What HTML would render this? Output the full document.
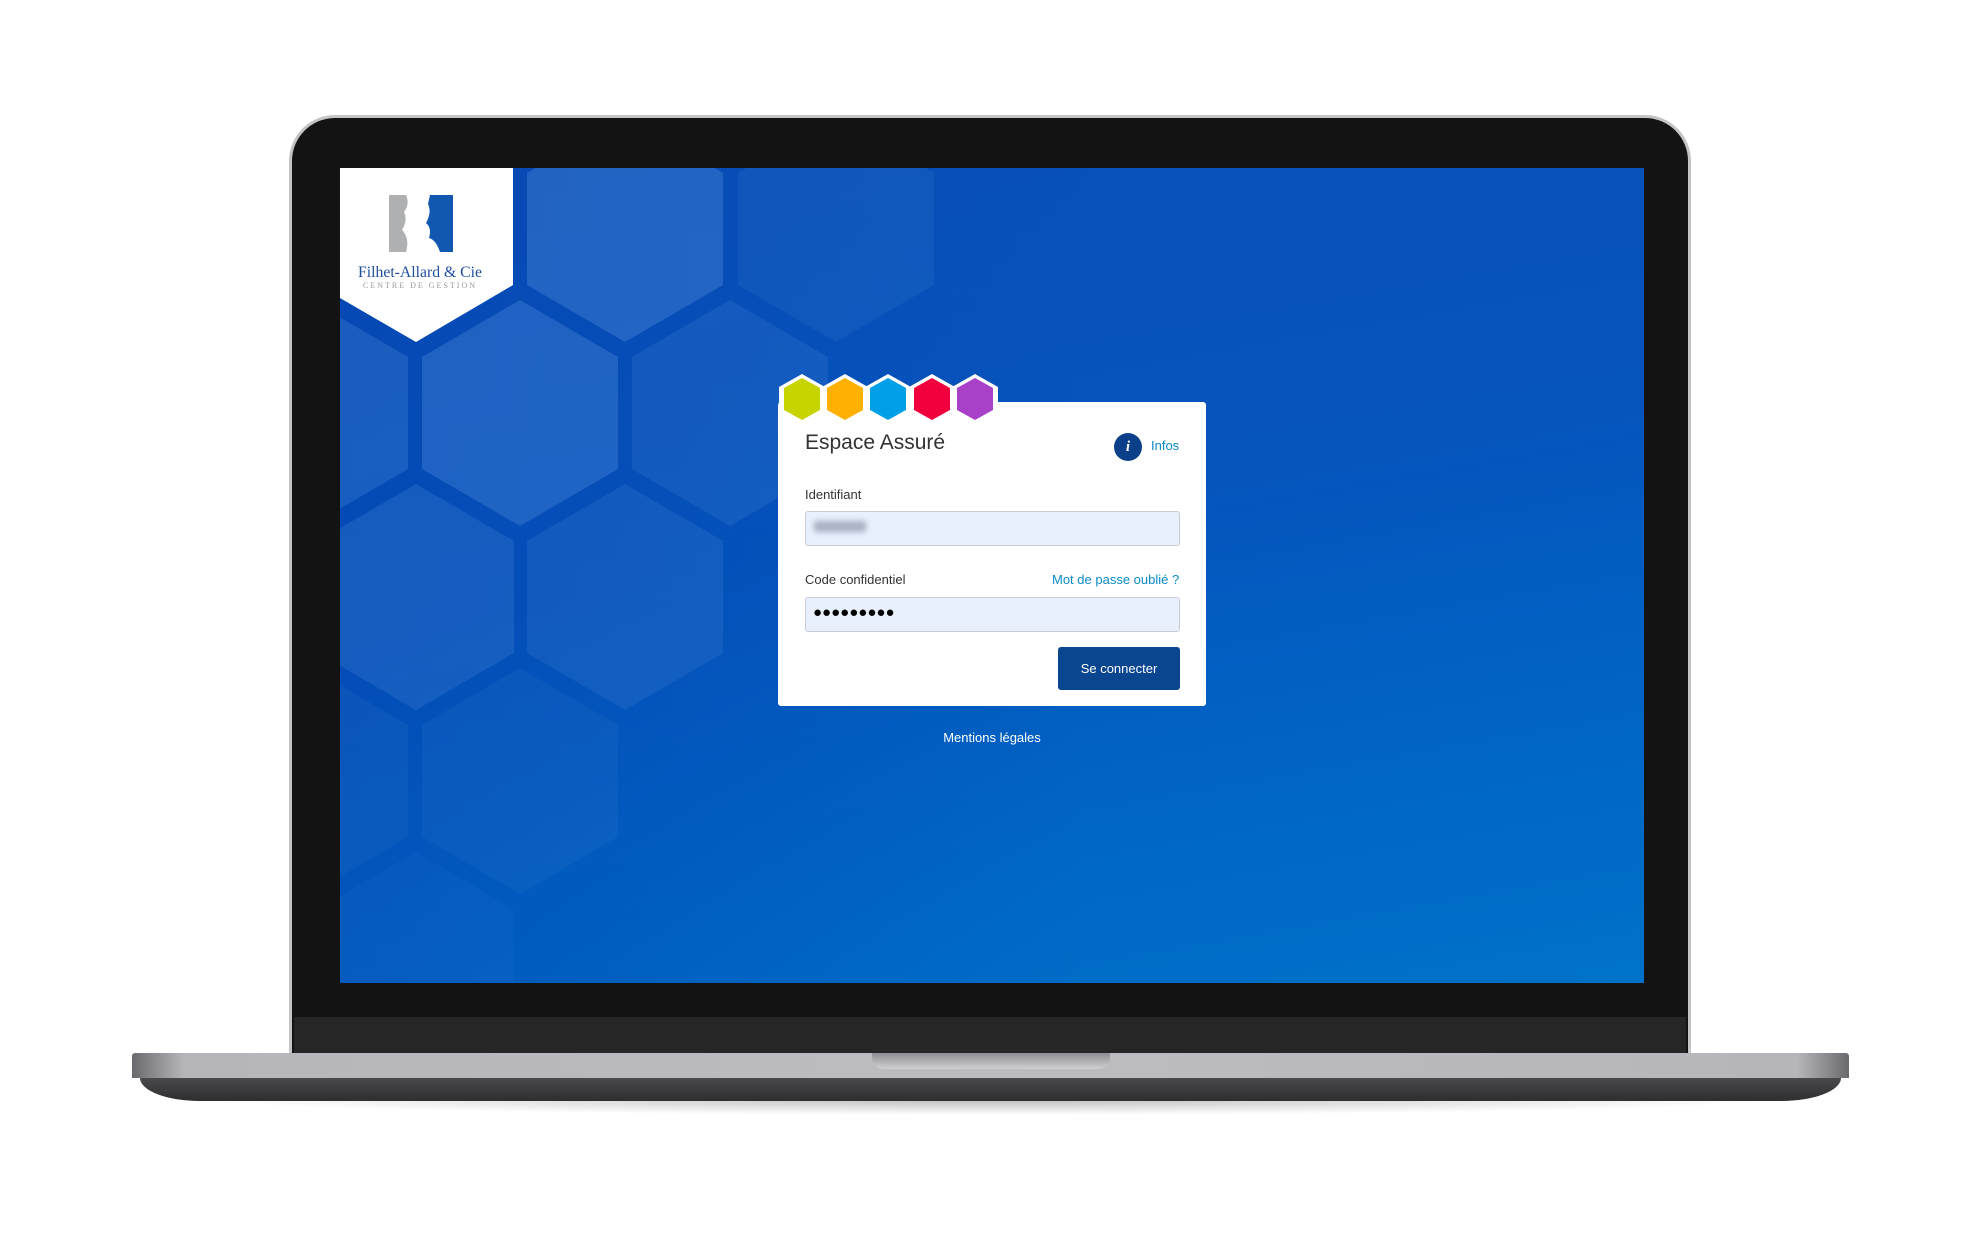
<!DOCTYPE html>
<html><head><meta charset="utf-8"><style>
html,body{margin:0;padding:0;background:#fff;width:1980px;height:1238px;overflow:hidden;font-family:"Liberation Sans",sans-serif}
.abs{position:absolute}
</style></head><body>
<div class="abs" style="left:200px;top:1085px;width:1580px;height:30px;border-radius:50%;background:radial-gradient(ellipse at center,rgba(0,0,0,0.25),rgba(0,0,0,0) 70%)"></div>
<div class="abs" style="left:289px;top:115px;width:1402px;height:950px;border-radius:46px 46px 0 0;background:#c4c4c6"></div>
<div class="abs" style="left:292px;top:118px;width:1396px;height:947px;border-radius:43px 43px 0 0;background:#131313"></div>
<div class="abs" style="left:294px;top:1017px;width:1392px;height:40px;background:#262626"></div>
<div class="abs" style="left:340px;top:168px;width:1304px;height:815px;overflow:hidden;background:linear-gradient(170deg,#0a4fb8 0%,#0555bd 45%,#0068c6 80%,#0072c9 100%)">
<svg width="1304" height="815" viewBox="0 0 1304 815" style="position:absolute;left:0;top:0">
<defs>
<polygon id="hx" points="0,-113 98,-56 98,56 0,113 -98,56 -98,-56"/>
<linearGradient id="lg" x1="0" y1="0" x2="1" y2="0"><stop offset="0" stop-color="#0036a8" stop-opacity="0.3"/><stop offset="1" stop-color="#0036a8" stop-opacity="0"/></linearGradient>
</defs>
<rect x="0" y="0" width="750" height="815" fill="url(#lg)"/>
<g fill="#4a8ad8">
<use href="#hx" x="285" y="61" opacity="0.4"/>
<use href="#hx" x="496" y="61" opacity="0.15"/>
<use href="#hx" x="-30" y="245" opacity="0.3"/>
<use href="#hx" x="180" y="245" opacity="0.38"/>
<use href="#hx" x="390" y="245" opacity="0.22"/>
<use href="#hx" x="76" y="429" opacity="0.25"/>
<use href="#hx" x="285" y="429" opacity="0.22"/>
<use href="#hx" x="-30" y="613" opacity="0.12"/>
<use href="#hx" x="180" y="613" opacity="0.12"/>
<use href="#hx" x="76" y="797" opacity="0.08"/>
</g>
<polygon points="0,0 173,0 173,117 76,174 0,130" fill="#fff"/>
<rect x="49" y="27" width="23" height="57" fill="#aeb0b2"/>
<path d="M66,27 L78,27 Q73,38 75,44 Q70,50 76,56 Q73,66 81,74 L84,84 L66,84 Q70,70 62,62 Q68,52 64,44 Q70,36 66,27Z" fill="#fff"/>
<path d="M90,27 L113,27 L113,84 L100,84 Q96,72 89,70 Q92,60 86,55 Q92,44 88,36Z" fill="#1257b0"/>
<text x="80" y="109" text-anchor="middle" font-family="Liberation Serif,serif" font-size="16" fill="#1f4e9c" textLength="124" lengthAdjust="spacingAndGlyphs">Filhet-Allard &amp; Cie</text>
<text x="80" y="120" text-anchor="middle" font-family="Liberation Serif,serif" font-size="8" letter-spacing="2" fill="#9a9a9a">CENTRE DE GESTION</text>
</svg>
</div>
<div class="abs" style="left:778px;top:402px;width:428px;height:304px;background:#fff;border-radius:3px"></div>
<svg class="abs" style="left:770px;top:370px;z-index:2" width="240" height="60" viewBox="0 0 240 60">
<g fill="#fff">
<polygon points="32,4 55,17 55,41 32,54 9,41 9,17"/>
<polygon points="75,4 98,17 98,41 75,54 52,41 52,17"/>
<polygon points="118,4 141,17 141,41 118,54 95,41 95,17"/>
<polygon points="162,4 185,17 185,41 162,54 139,41 139,17"/>
<polygon points="205,4 228,17 228,41 205,54 182,41 182,17"/>
</g>
<polygon points="32,8 50,18 50,40 32,50 14,40 14,18" fill="#c8d400"/>
<polygon points="75,8 93,18 93,40 75,50 57,40 57,18" fill="#ffb000"/>
<polygon points="118,8 136,18 136,40 118,50 100,40 100,18" fill="#00a0e8"/>
<polygon points="162,8 180,18 180,40 162,50 144,40 144,18" fill="#f0003c"/>
<polygon points="205,8 223,18 223,40 205,50 187,40 187,18" fill="#a840c8"/>
</svg>
<div class="abs" style="left:805px;top:431px;font-size:21px;color:#333">Espace Assuré</div>
<div class="abs" style="left:1114px;top:433px;width:28px;height:28px;border-radius:50%;background:#0a3f8a;color:#fff;font:italic bold 15px 'Liberation Serif',serif;text-align:center;line-height:28px">i</div>
<div class="abs" style="left:1151px;top:438px;font-size:13px;color:#0a8ac8">Infos</div>
<div class="abs" style="left:805px;top:487px;font-size:13px;color:#333">Identifiant</div>
<div class="abs" style="left:805px;top:511px;width:373px;height:33px;background:#e8f0fe;border:1px solid #c8ccd2;border-radius:3px"></div>
<div class="abs" style="left:814px;top:521px;width:52px;height:11px;background:#8d96a8;filter:blur(3px);opacity:.7"></div>
<div class="abs" style="left:805px;top:572px;font-size:13px;color:#333">Code confidentiel</div>
<div class="abs" style="left:1052px;top:572px;font-size:13px;color:#0a8ac8">Mot de passe oublié ?</div>
<div class="abs" style="left:805px;top:597px;width:373px;height:33px;background:#e8f0fe;border:1px solid #c8ccd2;border-radius:3px"></div>
<div class="abs" style="left:813px;top:604px;font-size:15px;color:#000">●●●●●●●●●</div>
<div class="abs" style="left:1058px;top:647px;width:122px;height:43px;background:#0a4590;border-radius:3px;color:#fff;font-size:13px;text-align:center;line-height:43px">Se connecter</div>
<div class="abs" style="left:900px;top:730px;width:184px;text-align:center;font-size:13px;color:#fff">Mentions légales</div>
<div class="abs" style="left:132px;top:1053px;width:1717px;height:25px;border-radius:3px 3px 0 0;background:linear-gradient(90deg,#6a6a6e 0%,#b6b6ba 3%,#bdbdc1 50%,#b6b6ba 97%,#6a6a6e 100%)"></div>
<div class="abs" style="left:872px;top:1053px;width:238px;height:16px;border-radius:0 0 12px 12px;background:linear-gradient(#8e8e92,#d0d0d4)"></div>
<div class="abs" style="left:140px;top:1078px;width:1701px;height:23px;border-radius:0 0 60px 60px/0 0 23px 23px;background:linear-gradient(#4a4a4d,#2e2e30)"></div>
</body></html>
